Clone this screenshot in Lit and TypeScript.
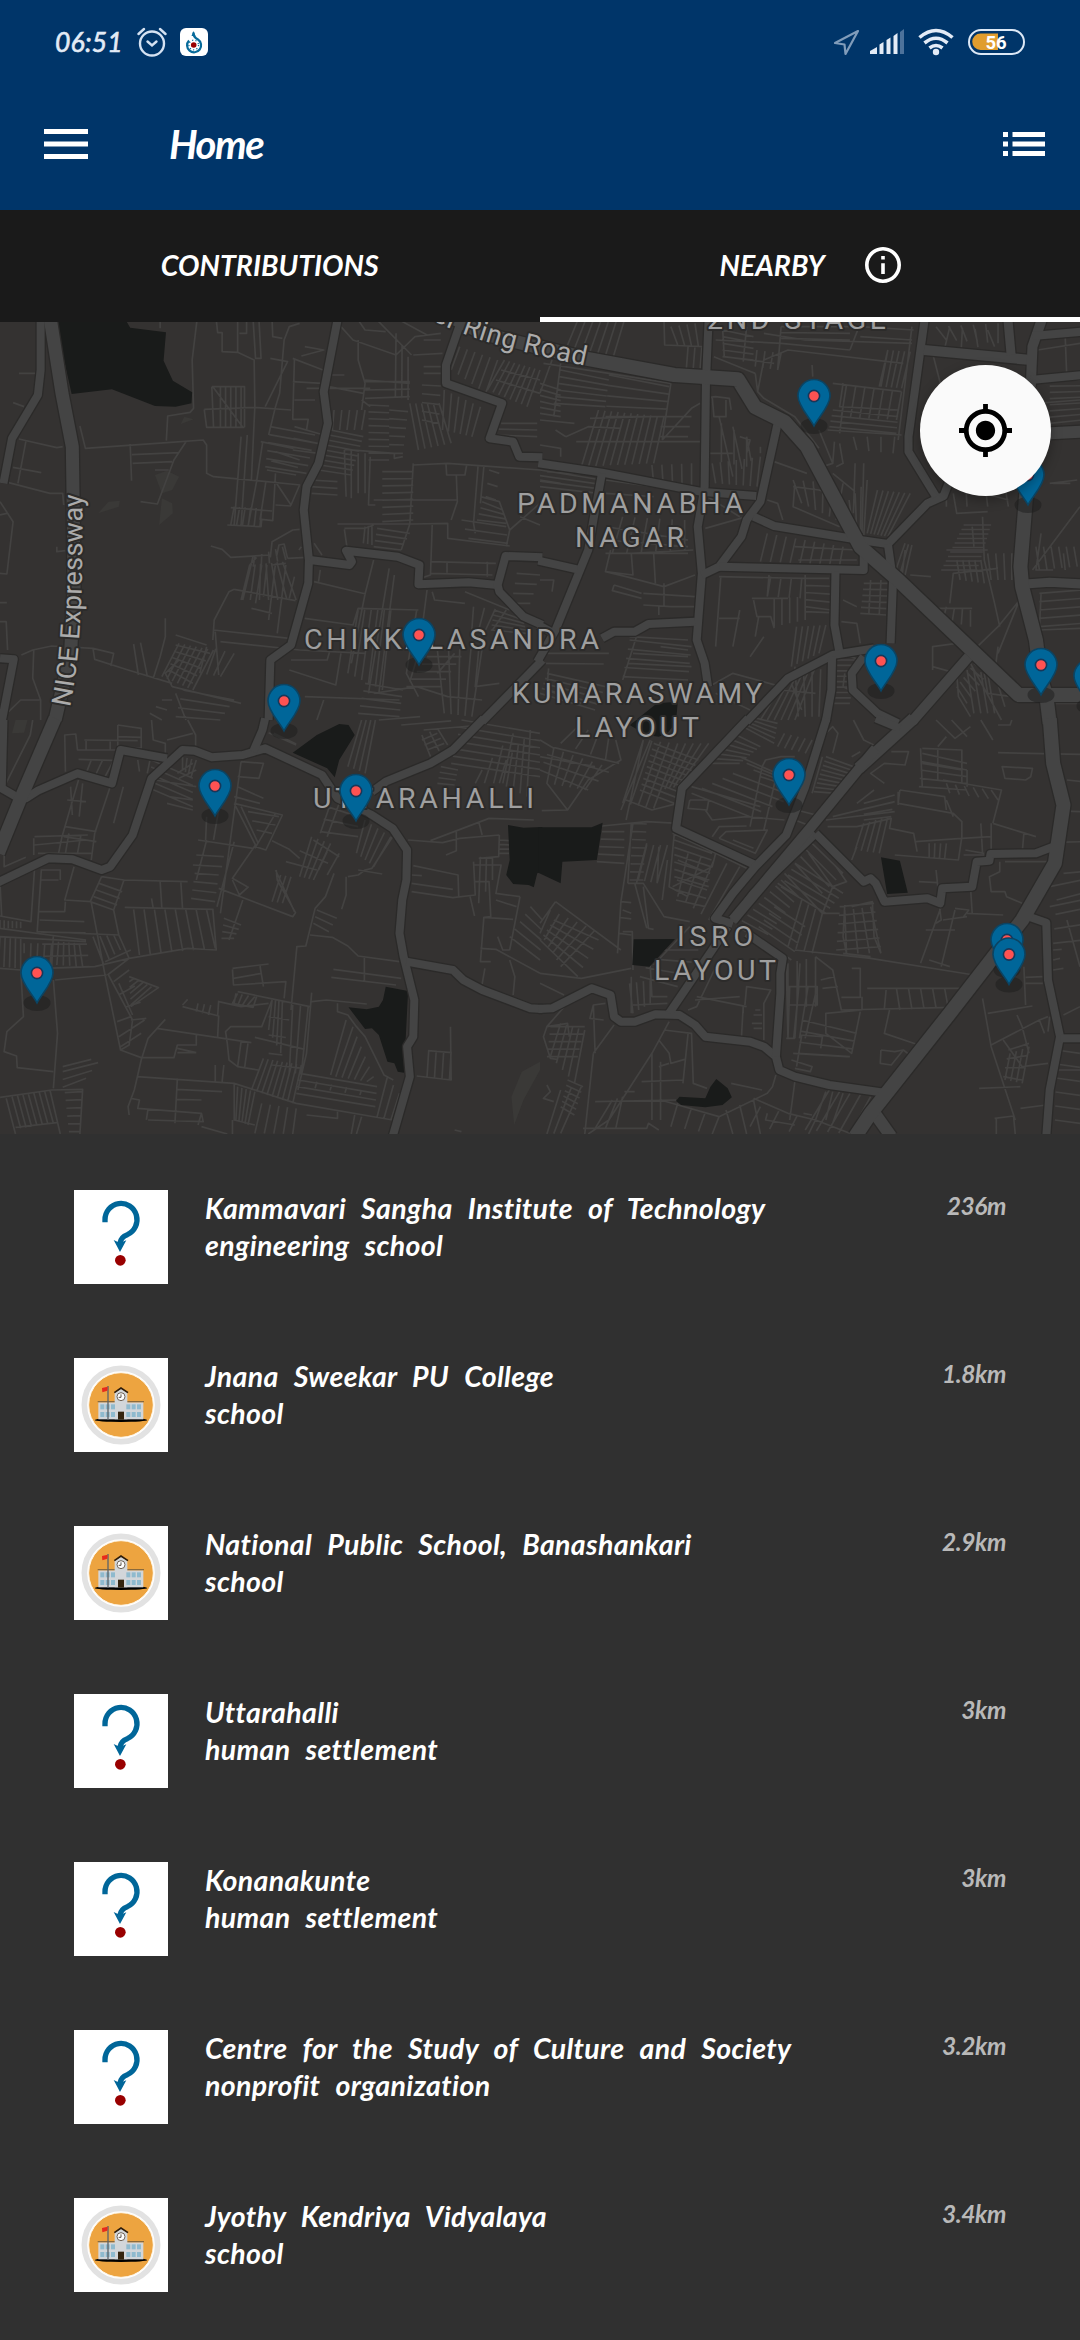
import { LitElement, html, svg, css } from "lit";
import { customElement, property } from "lit/decorators.js";

type Road = [number, string];
interface Tile {
  x: number;
  y: number;
  roads: Road[];
  water: string;
  parks: string;
  streets: string;
  // each entry: two guide segments (a-b, c-d) and the number of lines strung between them
  hatches: number[][];
}

const TILE_SCALE = "scale(0.34439 0.33333)";

const TILES: Tile[] = [
  {
    x: 0, y: 320,
    roads: [
      [8, "M118,0 118,150 110,225 35,355 10,490"],
      [13, "M145,-10 180,220 210,380 212,520 215,800 205,1000 160,1200"],
      [8, "M980,0 940,215 952,310 925,430 890,500 882,570 897,720 895,790 845,975 785,1020 780,1200"],
      [8, "M900,720 1015,735 1022,725 1005,692 1155,710 1218,735 1215,793 1360,787 1445,795"],
      [8, "M1575,712 1468,708 1445,795 1450,815 1520,890 1575,915"],
      [8, "M1340,0 1295,135 1295,190 1458,250 1422,355 1490,365 1508,410 1575,412"],
      [8, "M1575,1020 1400,1205"],
      [8, "M0,1015 40,1018 5,1205"],
      [13, "M1290,-20 1400,40 1575,85"],
    ],
    water: "M160,0 365,0 378,23 482,37 475,122 502,182 558,217 556,250 510,260 450,258 325,208 208,222Z",
    parks: "M450,465 485,452 520,470 500,510 470,520Z M285,580 315,545 348,542 345,560Z M470,535 500,550 502,580 462,615Z M535,290 562,298 525,312Z",
    streets: "M572,0 558,120 562,265 552,277 487,288 483,362 M232,318 248,385 485,368 590,360 600,375 600,460 620,470 745,482 872,495 M378,372 382,482 M383,404 520,398 M385,430 500,425 M540,365 505,420 457,552 408,545 M450,450 490,450 M55,357 165,383 182,380 M75,365 52,490 M38,442 120,458 M25,488 145,520 182,520 185,555 M0,545 38,605 20,762 0,760 M0,585 20,580 M165,680 165,695 190,692 M55,160 105,160 M38,248 70,260 M0,848 20,848 M0,905 18,905 22,990 M62,1005 95,990 150,978 270,985 330,1000 322,1038 M270,985 275,1018 372,1050 500,1090 M98,990 95,1075 118,1140 118,1200 M25,1175 60,1140 115,1140 M480,895 480,950 465,1010 445,1075 M388,972 402,1065 M408,968 428,1070 M510,945 600,975 M628,0 632,38 645,38 645,95 690,97 738,120 740,260 730,480 M690,0 690,97 M735,0 742,115 758,115 752,0 M716,0 716,40 695,40 M465,0 465,25 M593,268 738,262 845,270 M593,268 600,322 710,322 M615,200 710,200 710,322 M615,200 620,320 M618,200 705,322 M870,10 840,20 825,60 812,220 800,260 780,345 M790,0 792,50 820,55 M785,115 835,125 770,260 M812,50 M855,115 850,298 895,298 890,330 M850,115 938,150 M885,80 940,90 875,108 M850,185 935,190 M855,240 915,240 M700,350 680,615 M718,345 700,615 M763,365 745,485 720,620 M757,365 852,385 M670,563 790,573 M660,615 758,620 760,598 792,602 800,460 M772,485 755,600 M800,485 845,555 870,495 M800,555 845,558 M612,678 645,688 670,712 785,705 M870,628 850,630 790,665 785,712 M803,710 810,675 825,672 835,715 M835,715 890,712 M735,708 705,840 M760,735 742,850 M725,735 745,712 M680,808 858,842 M680,808 665,815 622,900 618,960 M620,930 840,955 M640,965 870,990 M790,735 830,730 M912,670 935,705 M868,690 875,680 M730,865 790,880 M775,735 765,830 M800,730 780,900 M830,735 805,940 M855,770 840,835 M625,935 635,1065 M912,785 1062,822 M930,750 925,785 M885,895 1025,915 1040,865 1215,870 M1085,720 1060,822 1020,1030 M1130,745 1070,1120 M1145,765 1100,1120 M1210,870 1180,1060 1215,1130 M1240,810 1225,930 M1255,615 1250,765 1220,775 M980,612 1200,612 1300,610 1300,655 1480,678 M1000,625 1060,625 1085,615 M1000,628 1008,685 M1200,430 1190,612 1165,690 M1200,435 1300,430 1568,450 M1295,432 1297,465 1350,465 1355,435 M1325,465 1328,545 1310,600 M1085,540 1330,540 M1388,440 1375,610 1380,640 M1405,440 1395,550 M1395,530 1450,545 1480,630 1568,550 M1480,630 1470,680 M1510,590 1568,615 M1250,725 1440,730 M1298,725 1298,758 M1415,725 1415,770 M1250,760 1430,765 M1255,815 1262,840 1350,850 M1350,815 1480,870 M1075,410 1070,555 1090,555 M1000,390 1005,530 M1020,390 1020,535 M1000,388 1145,400 1145,415 1170,410 M990,20 1025,60 1150,105 1205,50 1280,40 M1040,0 1060,30 1120,35 M1095,0 1195,105 M1160,0 1240,45 M1040,60 1040,120 1060,190 1050,270 M1060,180 1190,190 M1230,60 1280,60 M1200,105 1285,100 M1230,140 1290,140 M1230,160 1285,160 M955,200 1055,220 M960,165 1000,165 M500,1100 480,1060 520,1020 M500,1100 700,1150 M510,1120 540,1200 M845,1020 950,1020 960,985 M840,1050 975,1095 990,1000 M870,990 1060,1000 M885,1130 1160,1140 M940,1140 920,1200 M1085,1120 1210,1100 1300,1130 1400,1140 M1215,1000 1190,1085 M1320,1000 1270,1060 M1390,990 1380,1100 1450,1090",
    hatches: [
      [640, 200, 700, 200, 640, 320, 700, 320, 5],
      [890, 205, 1050, 240, 1075, 205, 1075, 260, 2],
      [785, 320, 770, 440, 915, 345, 890, 460, 6],
      [855, 320, 850, 390, 940, 345, 925, 400, 3],
      [775, 450, 800, 395, 860, 465, 870, 420, 3],
      [680, 560, 760, 565, 670, 615, 755, 618, 6],
      [1060, 185, 1060, 235, 1190, 185, 1190, 230, 3],
      [1070, 255, 1070, 420, 1130, 258, 1130, 420, 9],
      [1130, 270, 1130, 400, 1185, 275, 1170, 400, 6],
      [1150, 40, 1185, 110, 1148, 230, 1185, 240, 3],
      [1190, 250, 1275, 250, 1215, 390, 1310, 370, 6],
      [1225, 195, 1225, 300, 1280, 198, 1275, 310, 5],
      [1290, 210, 1395, 260, 1285, 330, 1370, 350, 6],
      [1335, 80, 1445, 120, 1310, 150, 1410, 220, 6],
      [1465, 120, 1568, 150, 1415, 210, 1530, 260, 8],
      [1455, 150, 1440, 180, 1568, 180, 1568, 220, 2],
      [1455, 310, 1440, 345, 1560, 310, 1560, 350, 3],
      [970, 270, 1060, 270, 965, 330, 1050, 330, 5],
      [960, 330, 925, 450, 1055, 350, 1020, 465, 9],
      [1020, 400, 1060, 400, 1020, 520, 1060, 520, 3],
      [1110, 455, 1110, 605, 1200, 455, 1200, 600, 8],
      [1095, 625, 1085, 680, 1190, 640, 1165, 690, 4],
      [1060, 620, 1080, 615, 1055, 670, 1080, 675, 3],
      [1340, 600, 1360, 655, 1470, 620, 1475, 670, 3],
      [1400, 545, 1385, 600, 1460, 570, 1470, 610, 4],
      [1420, 450, 1410, 530, 1450, 460, 1440, 540, 3],
      [740, 710, 820, 680, 735, 740, 830, 720, 5],
      [725, 735, 820, 725, 700, 840, 860, 840, 7],
      [1040, 870, 1135, 870, 1010, 1060, 1110, 1110, 6],
      [520, 970, 620, 990, 470, 1070, 560, 1110, 7],
      [510, 975, 490, 1050, 610, 1000, 560, 1090, 5],
      [600, 980, 680, 1000, 580, 1060, 640, 1070, 4],
      [1375, 860, 1470, 870, 1370, 930, 1430, 930, 4],
      [1435, 870, 1425, 930, 1520, 900, 1530, 940, 5],
      [1500, 760, 1485, 850, 1568, 765, 1540, 850, 4],
      [1240, 1010, 1180, 1100, 1340, 1010, 1280, 1100, 5],
      [1060, 1090, 1040, 1180, 1170, 1110, 1160, 1190, 5],
      [1270, 990, 1400, 985, 1290, 1180, 1370, 1190, 5],
      [530, 1110, 510, 1190, 680, 1140, 640, 1200, 4],
      [900, 480, 905, 520, 980, 485, 980, 525, 3],
      [470, 1140, 435, 1180, 500, 1140, 470, 1200, 3],
    ],
  },
  {
    x: 540, y: 320,
    roads: [
      [8, "M490,-10 482,180 478,500 458,620 470,760 455,960 478,1030 488,1100"],
      [8, "M-5,430 180,458 465,515 628,528"],
      [8, "M690,310 640,545 600,600 585,650 520,740 470,765"],
      [8, "M180,460 155,600 140,690 45,930 -8,1025"],
      [8, "M-5,722 108,748"],
      [8, "M-5,915 40,940"],
      [8, "M620,590 680,618 930,660 1010,672 1125,550 1172,528 1190,480"],
      [8, "M1150,530 1070,395 1070,350 1118,-10"],
      [8, "M520,740 940,750 940,700"],
      [8, "M1010,672 1025,780 1018,970"],
      [8, "M858,755 855,915 870,1000"],
      [8, "M180,955 215,935 275,935 315,912 450,905"],
      [8, "M600,1205 720,1075 850,1005 970,985"],
      [8, "M940,1010 905,1060 908,1110 980,1180 1040,1210"],
      [8, "M848,1010 846,1110 830,1205"],
      [10, "M1080,1205 1245,1010"],
      [10, "M1115,90 1425,120"],
      [9, "M1358,-10 1368,105"],
      [10, "M1460,-10 1430,80 1425,200"],
      [8, "M1430,48 1575,35"],
      [8, "M1425,180 1575,165"],
      [12, "M1440,342 1575,335"],
      [9, "M1410,792 1480,787 1575,792"],
      [14, "M1412,520 1395,740 1400,800 1440,960 1455,1080 1470,1125 1480,1210"],
      [14, "M-10,80 130,115 390,165 575,178 625,262 710,305 775,380 930,680 1040,780 1390,1125 1575,1125"],
    ],
    water: "M285,1195 340,1150 400,1145 395,1205 280,1205Z",
    parks: "",
    streets: "M360,0 362,75 480,80 M530,20 535,110 680,130 M505,110 600,150 625,160 M600,20 590,125 M632,215 650,120 720,90 1055,130 M510,60 700,70 900,90 M700,20 690,150 M650,40 770,60 1080,70 M930,10 900,90 M1010,90 985,200 M1080,20 1040,360 M625,160 632,215 650,235 740,290 810,385 M790,135 792,170 M850,190 1050,215 M880,190 870,260 1040,270 M835,330 1050,345 M855,365 850,430 M810,330 850,430 820,440 M870,370 880,430 860,440 M850,460 915,515 M915,430 910,580 M940,430 935,640 M880,260 870,340 M680,425 775,460 M660,540 690,550 705,600 M740,490 735,560 870,620 M735,500 810,510 870,530 M470,235 510,230 550,235 555,270 M500,230 505,290 540,290 540,240 M580,350 610,360 600,400 M490,400 560,400 M60,130 40,290 M75,350 45,330 M75,350 140,320 235,325 M145,295 315,290 M355,360 440,265 465,250 M380,190 355,360 M105,365 465,365 M0,375 60,385 60,410 M0,300 100,310 M10,130 200,160 380,190 M35,120 0,220 M0,480 60,490 M20,455 160,465 M480,625 600,590 M470,520 580,590 M190,755 250,770 360,800 450,765 M215,795 295,820 M215,795 210,812 295,835 M190,640 M205,690 190,755 270,765 265,700 445,690 M330,700 335,790 M300,820 450,830 M360,790 360,860 450,860 M300,855 380,860 M345,860 345,885 M0,780 40,780 35,815 M525,770 510,980 M520,895 580,895 M580,870 560,980 M665,765 660,830 M520,770 770,775 M770,765 770,875 840,878 M615,835 720,835 M620,840 630,890 670,890 680,925 M635,890 625,950 M650,950 610,1010 M0,1000 200,1000 M0,1030 185,1032 M10,990 30,970 M280,950 240,1080 M350,980 430,990 M270,1000 430,1010 M255,1030 440,1040 M260,950 430,960 M25,1045 20,1110 120,1150 M880,840 920,860 M875,905 920,910 930,970 M875,1000 930,1020 M1140,1050 1140,980 1210,970 M1140,1040 1210,1060 M1155,865 1255,865 M1190,850 1200,760 1330,745 M1200,520 1210,580 1300,575 M1285,590 1290,720 1320,850 1335,920 M1330,920 1440,780 M1240,1010 1330,920 M1430,750 1568,560 M1455,640 1440,750 1490,750 M1490,490 1540,490 M1500,600 M1520,700 1525,750 M1455,820 1450,930 1568,925 M1560,480 1480,490 M1140,100 1165,200 M1525,50 1530,180 M1445,90 1568,70 M1440,250 1568,240 M1290,520 1360,540 M1050,780 1060,690 M1075,765 1135,770 M1180,690 1300,690 M1255,620 1260,680 M1330,980 1320,1060 1350,1160 M1260,1000 1210,1060 1215,1130 1250,1190 M1290,1060 1300,1120 1370,1130 M1490,1150 1568,1150 M1400,820 1330,1000 M1250,1030 1340,1200 M885,1060 880,1100 900,1110 M510,1120 610,1170 M490,1100 560,1060 700,1100 M730,1090 760,1170 M700,1110 800,1120",
    hatches: [
      [110, 0, 245, 0, 70, 100, 210, 120, 7],
      [380, 20, 450, 10, 400, 75, 460, 80, 4],
      [430, 80, 470, 80, 425, 145, 465, 145, 3],
      [530, 30, 530, 110, 620, 50, 620, 120, 5],
      [630, 90, 700, 100, 625, 140, 690, 150, 4],
      [700, 20, 700, 55, 900, 20, 900, 60, 3],
      [930, 20, 930, 50, 1085, 30, 1080, 60, 2],
      [1010, 90, 1075, 95, 990, 200, 1050, 205, 5],
      [890, 195, 1050, 215, 875, 290, 1035, 300, 7],
      [850, 270, 840, 320, 1040, 290, 1035, 340, 4],
      [910, 350, 1030, 350, 920, 390, 1025, 400, 4],
      [60, 150, 40, 250, 200, 180, 190, 260, 6],
      [0, 190, 0, 280, 60, 210, 60, 290, 6],
      [200, 165, 190, 290, 375, 200, 370, 290, 5],
      [170, 270, 360, 290, 120, 440, 330, 430, 11],
      [350, 290, 350, 350, 440, 290, 430, 350, 3],
      [325, 435, 440, 430, 330, 490, 440, 500, 5],
      [0, 450, 0, 500, 180, 480, 170, 520, 4],
      [190, 480, 190, 520, 330, 500, 330, 530, 2],
      [490, 290, 600, 350, 490, 420, 600, 440, 4],
      [500, 430, 640, 410, 510, 490, 630, 500, 7],
      [520, 290, 640, 380, 560, 470, 640, 400, 4],
      [660, 640, 880, 680, 640, 725, 870, 735, 9],
      [740, 680, 750, 720, 920, 690, 920, 720, 2],
      [735, 480, 880, 490, 760, 550, 860, 600, 6],
      [880, 560, 950, 480, 900, 640, 940, 650, 5],
      [980, 510, 1075, 520, 950, 640, 1010, 650, 7],
      [770, 775, 770, 860, 840, 775, 845, 870, 5],
      [670, 770, 760, 775, 660, 830, 755, 835, 4],
      [680, 835, 770, 830, 680, 920, 770, 900, 5],
      [745, 920, 830, 915, 730, 1040, 810, 1000, 6],
      [940, 790, 930, 880, 1010, 790, 1005, 885, 6],
      [960, 780, 990, 780, 955, 880, 985, 885, 2],
      [1230, 615, 1165, 750, 1310, 615, 1270, 750, 11],
      [1180, 860, 1250, 870, 1170, 900, 1250, 920, 4],
      [1060, 670, 1080, 675, 1030, 760, 1060, 765, 3],
      [1480, 180, 1480, 310, 1575, 180, 1575, 300, 8],
      [1150, 20, 1330, 10, 1180, 60, 1330, 70, 6],
      [1190, 20, 1300, 30, 1175, 85, 1320, 80, 4],
      [1440, 680, 1550, 680, 1450, 750, 1560, 740, 6],
      [1450, 820, 1450, 920, 1575, 810, 1575, 910, 5],
      [240, 590, 420, 600, 210, 700, 420, 690, 6],
      [190, 620, 190, 700, 430, 660, 430, 700, 3],
      [260, 960, 240, 1070, 440, 980, 430, 1080, 5],
      [860, 1020, 850, 1150, 920, 1020, 900, 1150, 9],
      [700, 1100, 800, 1040, 640, 1200, 740, 1200, 6],
      [740, 1040, 840, 1050, 750, 1190, 830, 1190, 5],
      [1260, 1030, 1210, 1100, 1300, 1060, 1240, 1150, 6],
      [1240, 1050, 1300, 1060, 1260, 1180, 1320, 1180, 4],
      [1180, 560, 1360, 560, 1180, 500, 1350, 500, 4],
      [20, 1060, 0, 1120, 190, 1100, 160, 1170, 5],
      [1210, 720, 1280, 720, 1220, 780, 1290, 790, 5],
      [1300, 700, 1370, 700, 1310, 780, 1370, 780, 4],
    ],
  },
  {
    x: 0, y: 720,
    roads: [
      [8, "M10,0 5,205 55,235 75,235 110,212 225,160 325,190 350,90 485,115"],
      [8, "M-5,487 140,415 210,418 295,450 320,440 385,345 440,175 530,90 565,92 615,112 705,105 770,85 935,165 980,235 1080,285 1140,325 1182,390 1180,480 1168,540 1160,640 1172,710 1203,840 1200,950 1182,980 1190,1070 1140,1250"],
      [8, "M770,-5 762,30 735,95"],
      [8, "M1405,-5 1315,90 1250,130 1120,185 1080,215"],
      [8, "M1180,725 1315,750 1345,780 1400,810 1540,865 1575,867"],
      [13, "M160,-5 60,235 -5,400"],
    ],
    water: "M850,98 920,45 985,12 1012,15 1030,45 985,120 972,172 950,145Z M1475,315 1520,323 1575,321 1575,455 1560,460 1550,502 1535,495 1490,492 1470,465 1480,420Z M1120,800 1185,813 1173,1058 1155,1055 1145,1030 1125,1025 1100,945 1080,925 1060,927 1012,862 1065,868 1100,860 1112,840Z",
    parks: "M35,40 45,0 80,0 70,38Z M1568,1025 1515,1055 1485,1130 1493,1215 1520,1140 1568,1050Z",
    streets: "M95,0 88,45 15,195 M190,155 188,45 220,42 225,90 340,90 M245,60 400,62 M342,15 410,25 410,85 342,78 342,15 M342,50 410,52 M228,118 350,122 M440,0 445,60 480,70 480,110 M545,0 568,45 568,80 M485,60 560,40 M228,180 180,350 170,400 M240,190 230,290 M195,240 250,245 M205,200 210,285 M358,200 330,310 M320,200 275,340 265,420 M100,350 255,345 M98,355 98,405 M75,412 12,440 12,400 M100,450 90,605 0,588 M120,450 108,635 345,645 M120,480 170,480 M118,450 175,450 175,480 M215,440 188,540 265,545 M190,545 188,575 110,575 M295,470 262,545 330,570 360,480 295,470 M360,480 545,485 M465,485 470,565 M525,485 530,565 M362,562 620,568 M440,535 445,565 M330,570 345,645 375,715 M618,568 628,690 545,685 375,715 275,740 M265,548 305,765 350,990 410,1013 505,1013 515,975 570,975 570,945 M0,625 250,660 M0,650 250,665 M155,645 150,740 M130,745 275,740 M160,780 310,765 M60,745 68,890 20,935 12,995 48,1008 50,1043 155,1055 M155,780 167,940 155,1105 M0,745 60,750 M0,490 5,590 M375,715 312,765 M305,725 380,690 M315,765 385,900 375,975 350,990 M340,905 380,890 M375,770 460,803 380,860 M345,790 385,885 M530,860 635,888 632,950 M530,855 545,838 M635,845 700,860 780,850 M635,842 632,888 M455,925 730,968 M480,898 430,955 410,1020 390,1110 372,1160 375,1185 M398,1070 680,1090 860,1150 1140,1200 M515,1075 508,1210 M512,1108 645,1115 M512,1138 585,1140 M380,1135 405,1140 400,1165 585,1180 590,1205 430,1200 M430,1165 425,1200 M585,1180 575,1215 M700,125 765,130 752,175 690,170 M700,125 665,390 640,580 M690,200 765,235 M680,230 755,250 M680,250 820,285 772,390 742,380 M680,250 742,375 675,475 718,500 M700,260 750,370 M800,280 740,385 M790,362 840,388 870,415 M575,360 735,385 M640,240 620,360 M600,290 597,360 M570,405 650,410 M490,230 560,240 M485,250 560,270 M450,180 570,200 M560,435 645,440 M635,505 850,590 858,578 805,480 802,450 M705,540 665,660 M800,450 855,575 M675,480 695,525 722,500 M970,460 945,530 915,565 888,678 862,680 845,870 M900,645 965,652 1010,678 1040,708 1160,725 M968,748 1165,775 M962,772 1150,795 M1058,712 1058,785 M905,818 890,1000 865,1110 M905,845 948,840 1065,852 M980,850 980,875 1010,885 1035,920 1060,950 1115,1065 1142,1080 M1005,900 960,1065 M1040,450 1110,462 M1010,470 1040,465 1060,450 1080,445 1140,350 M1005,470 1005,525 992,568 M1185,360 1285,368 1335,355 1450,345 M1250,362 1420,295 1550,300 M1325,335 1325,392 1295,405 M1390,305 1400,345 M1200,437 1330,465 1332,530 M1195,490 1315,508 M1195,515 1315,533 1380,525 1375,425 M1195,465 1225,467 M1365,530 1378,588 M1450,345 1448,410 1390,415 M1375,435 1455,435 1440,520 1510,530 M1380,485 1420,485 1425,590 1405,592 1395,725 1425,725 M1405,592 1490,598 M1510,530 1480,690 M1440,540 1500,560 M1480,690 1460,690 1445,650 M1395,685 1440,688 1568,760 M1408,745 1400,792 M1480,720 1495,770 1490,825 M790,1035 880,1045 M660,970 655,935 670,920 760,920 790,840 M660,970 665,1020 690,1040 750,1050 M740,952 885,988 M690,815 900,860 M690,820 675,850 735,862 745,830 M675,745 780,732 M675,748 678,795 830,785 825,835 M678,775 760,760 M755,738 765,800 M1308,920 1310,1080 1210,1068 M1243,992 1312,998 M182,1040 265,1018 M0,1132 150,1110 240,1108 232,1242 M18,1135 45,1242 M145,1110 175,1242 M45,1222 165,1208 M780,38 860,75 M795,40 860,72 M1320,1230 1340,1235 M680,1090 680,1200 740,1215 M675,1200 675,1242 M980,1175 980,1195 890,1185 M1030,1185 1020,1242 M1050,1190 1035,1242 M585,1220 660,1242",
    hatches: [
      [250, 60, 320, 62, 250, 88, 320, 90, 2],
      [265, 120, 330, 122, 250, 160, 305, 170, 3],
      [100, 375, 110, 400, 250, 360, 265, 400, 2],
      [190, 320, 185, 350, 280, 335, 280, 365, 2],
      [200, 340, 235, 345, 190, 400, 225, 400, 2],
      [288, 490, 272, 530, 355, 515, 340, 555, 3],
      [388, 568, 600, 570, 405, 705, 625, 685, 8],
      [0, 600, 60, 605, 0, 625, 60, 625, 6],
      [0, 650, 60, 655, -5, 740, 60, 745, 5],
      [70, 670, 150, 670, 70, 700, 145, 740, 5],
      [170, 665, 230, 670, 165, 735, 240, 740, 5],
      [115, 600, 130, 745, 245, 605, 260, 740, 5],
      [270, 650, 330, 645, 300, 730, 350, 690, 4],
      [330, 785, 380, 900, 375, 750, 425, 895, 4],
      [375, 785, 380, 855, 390, 775, 440, 800, 5],
      [345, 950, 350, 980, 420, 900, 410, 940, 2],
      [575, 850, 612, 855, 570, 875, 605, 885, 3],
      [515, 985, 515, 998, 570, 998, 570, 998, 2],
      [515, 160, 520, 175, 560, 130, 570, 150, 2],
      [440, 120, 435, 205, 560, 175, 560, 260, 5],
      [400, 120, 470, 125, 405, 155, 450, 165, 3],
      [530, 110, 570, 120, 530, 150, 555, 170, 4],
      [565, 460, 555, 535, 635, 465, 625, 545, 4],
      [600, 360, 680, 365, 570, 480, 630, 560, 2],
      [720, 275, 745, 330, 810, 290, 790, 340, 3],
      [650, 595, 643, 655, 700, 615, 680, 655, 4],
      [815, 465, 845, 470, 790, 545, 820, 550, 3],
      [905, 350, 960, 370, 870, 470, 910, 480, 4],
      [985, 400, 950, 395, 950, 465, 925, 450, 2],
      [830, 425, 910, 360, 920, 450, 985, 410, 3],
      [950, 260, 930, 335, 1040, 290, 1040, 350, 3],
      [960, 250, 985, 250, 930, 340, 950, 350, 2],
      [1060, 300, 1135, 350, 1035, 400, 1085, 440, 5],
      [920, 570, 910, 610, 978, 595, 955, 635, 3],
      [1050, 0, 1090, 0, 1010, 140, 1060, 160, 4],
      [1100, 0, 1230, 30, 1220, -10, 1400, 15, 3],
      [1225, 45, 1270, 25, 1250, 110, 1300, 75, 3],
      [1225, 60, 1240, 90, 1270, 40, 1290, 70, 3],
      [1340, 0, 1310, 130, 1568, 40, 1568, 170, 7],
      [1280, 140, 1270, 190, 1330, 150, 1320, 195, 4],
      [1470, 120, 1540, 30, 1450, 190, 1530, 230, 5],
      [1400, 150, 1490, 40, 1380, 190, 1460, 190, 4],
      [1540, 560, 1480, 650, 1575, 600, 1568, 720, 5],
      [1450, 360, 1450, 400, 1478, 362, 1478, 400, 4],
      [1395, 410, 1430, 410, 1390, 550, 1430, 480, 3],
      [685, 820, 740, 830, 680, 850, 715, 860, 4],
      [790, 840, 820, 845, 780, 930, 815, 1000, 4],
      [780, 890, 780, 1000, 840, 900, 820, 1005, 3],
      [850, 855, 895, 860, 840, 1060, 875, 1060, 3],
      [765, 1015, 875, 1035, 730, 1110, 850, 1150, 9],
      [700, 965, 720, 970, 690, 1040, 710, 1045, 2],
      [870, 1060, 860, 1120, 1095, 1100, 1090, 1160, 4],
      [1025, 920, 1085, 1070, 975, 1070, 1065, 1085, 6],
      [1125, 1070, 1160, 1120, 1095, 1190, 1135, 1200, 3],
      [1245, 990, 1310, 995, 1240, 1070, 1305, 1080, 4],
      [182, 1055, 182, 1102, 285, 1028, 250, 1075, 3],
      [35, 1130, 130, 1115, 60, 1225, 155, 1210, 7],
      [188, 1118, 200, 1235, 240, 1115, 230, 1235, 6],
      [690, 1100, 740, 1115, 685, 1200, 720, 1215, 5],
      [760, 1150, 860, 1165, 740, 1240, 850, 1242, 5],
      [625, 1035, 650, 1035, 625, 1085, 645, 1085, 2],
      [920, 1085, 1050, 1110, 915, 1105, 1045, 1125, 4],
    ],
  },
  {
    x: 540, y: 720,
    roads: [
      [8, "M605,-5 412,205 395,325 625,435"],
      [8, "M832,-5 770,200 715,345 625,440 560,520 508,595 560,612"],
      [8, "M560,605 620,520 800,340"],
      [12, "M1085,-5 925,145"],
      [10, "M975,85 780,330 560,600"],
      [8, "M975,-5 1045,25"],
      [8, "M800,340 940,485 960,475 975,490 1000,545 1125,535 1162,550 1168,505 1255,500 1268,425 1305,422 1308,402 1440,400 1490,380"],
      [8, "M-5,867 35,865 150,805 205,825 215,890 235,905 275,905 335,883 405,885 450,915 480,950 610,965 650,980 685,1010 695,1050 740,1070 840,1095 1010,1120"],
      [8, "M375,880 500,690 545,620"],
      [8, "M600,640 705,715 698,760 698,820 685,1010"],
      [8, "M1420,590 1470,608 1475,780 1510,950 1480,1110 1470,1250"],
      [8, "M1510,955 1575,955"],
      [12, "M965,1170 1020,1250"],
      [14, "M1480,-5 1490,130 1520,255 1495,430 1400,600 1190,880 960,1180 915,1250"],
    ],
    water: "M-5,322 150,322 182,308 165,420 65,425 60,490 -5,458Z M272,658 392,657 318,740 268,735Z M990,412 1045,422 1068,518 1008,522Z M395,1143 405,1130 480,1135 495,1100 512,1077 545,1105 557,1132 530,1155 480,1162 410,1155Z M260,15 280,0 400,0 370,40 345,50 310,45Z",
    parks: "",
    streets: "M0,60 40,85 20,190 80,270 5,272 M0,110 160,140 M80,270 140,180 235,120 220,60 M250,240 325,270 400,250 M235,270 320,60 M300,60 250,300 M270,310 235,545 225,700 M180,318 310,305 400,310 M310,370 280,490 M255,490 300,490 360,590 435,605 M300,500 315,625 330,628 M275,490 310,625 M240,570 265,580 M240,635 268,635 270,750 M45,545 235,690 M45,545 0,610 M0,760 120,775 265,745 M0,790 70,825 M265,310 255,490 M345,380 340,490 M370,420 355,540 M385,340 510,400 500,440 385,500 M390,340 375,500 430,530 M510,400 600,445 M435,240 490,240 485,270 430,265 435,240 M440,200 640,260 M480,270 500,300 600,290 710,300 M500,350 520,320 600,318 M520,355 540,335 660,330 625,400 520,355 M560,360 620,385 M645,140 655,120 700,110 740,110 M645,140 610,320 M690,150 650,330 M745,270 820,290 M740,300 790,320 M820,110 790,220 M810,60 850,20 865,40 850,100 M910,0 940,60 980,80 M905,110 930,95 M1020,95 1070,95 1060,135 1000,130 960,160 1000,190 M1110,85 1225,90 1225,190 M1105,85 1110,200 M1155,85 1155,180 M1155,80 1180,50 M1110,130 1225,150 M1045,210 1040,250 1200,280 1225,305 1225,350 M1045,210 1175,230 1180,270 M1170,180 1340,210 1315,310 M1240,150 1240,200 M1150,0 1205,55 1250,20 M1195,0 1240,50 M1280,0 1315,60 M1370,0 1365,15 1330,15 M1330,98 1568,103 M1342,140 1430,145 1425,170 1410,180 1350,175Z M835,320 920,320 1020,295 1015,325 1085,340 1095,395 M830,300 1030,275 M850,290 1030,245 M920,250 970,210 M920,380 905,420 M1030,405 1215,420 1225,350 M1090,365 1225,355 1310,350 M1235,390 1290,400 M1230,405 1290,405 M1280,310 1285,400 M1310,310 1310,400 M1315,310 1440,350 M1405,340 1400,400 M1335,425 1335,455 1305,470 1310,515 1350,515 1355,530 1400,550 M1350,425 1480,425 M1150,450 1155,500 M1100,485 1155,488 M1250,500 1255,580 M1160,560 1165,600 1150,610 M1205,565 1245,570 1230,590 M1240,580 1345,585 M1165,560 1105,730 M1205,570 1165,740 M1120,630 1205,630 M780,400 850,500 820,580 870,580 M710,460 820,580 M690,490 750,530 M850,500 890,485 860,440 M740,690 960,715 1260,765 1225,800 M885,555 880,650 890,700 M905,560 965,545 970,650 990,700 M880,700 960,710 M950,805 1230,805 M1005,810 1000,865 M800,710 850,750 875,870 1195,862 M935,830 935,870 830,880 830,940 905,1000 930,875 M875,832 930,832 930,745 905,745 M815,780 855,770 M820,805 865,800 M1015,870 1000,940 1100,975 M990,990 1030,995 1055,990 1020,1035 988,1030 990,990 M1055,990 1080,1010 M1285,835 1310,980 1380,1200 M1300,880 1430,858 M1405,740 1410,855 M1310,975 1450,900 1475,890 M1385,885 1400,920 1420,1000 M1345,960 1400,1040 1475,1030 M1275,1105 1395,1100 M1325,1195 1325,1242 M1320,1195 1375,1188 1380,1242 M1395,1165 1470,1155 M1480,1050 1568,1050 M1520,885 1568,860 M1490,690 1515,688 M1490,720 1510,715 M1490,750 1520,745 M1410,772 1460,770 M1410,790 1460,790 M1530,600 1568,740 M360,930 440,940 445,1090 485,1105 M375,905 325,1000 200,1200 140,1242 M430,940 415,1090 M345,960 375,1000 380,1030 420,1018 M350,1025 350,1200 M375,1030 345,1040 M295,1085 415,1080 M325,1000 325,1200 M245,1115 275,1115 M160,1145 395,1140 M125,1225 310,1225 315,1210 345,1230 M155,1000 130,1242 M155,1000 215,915 M155,855 160,1000 M20,920 10,950 30,1015 50,1018 M75,855 20,920 80,910 85,950 M190,850 155,855 145,895 185,900 M20,1095 30,1115 10,1135 40,1145 M520,1190 660,1120 675,1100 685,1065 M555,1090 645,1110 M520,1190 350,1140 M620,1135 720,1180 800,1200 900,1240 M660,1180 655,1200 740,1215 M740,1085 725,1200 M830,1115 800,1200 M765,1180 790,1185 M850,1115 830,1200 M880,1120 850,1210 M455,830 600,860 M520,720 455,860 430,870 M590,860 585,950 M595,855 600,800 670,810 650,850 650,960 M625,870 640,870 M620,885 645,885 M615,910 645,910 M620,925 645,925 M720,955 715,730 M740,955 755,730 M715,955 740,955 M720,800 805,800 805,855 720,855 M320,735 325,830 370,830 M265,770 265,880 M435,620 330,735 M270,855 370,850 M760,945 745,1040 M755,945 820,950 815,985 M735,1000 890,1010 M730,1020 790,1040 785,1055 740,1045",
    hatches: [
      [40, 85, 180, 135, 20, 190, 130, 210, 6],
      [30, 80, 0, 150, 230, 130, 140, 210, 4],
      [110, 20, 200, 50, 60, 70, 190, 120, 4],
      [300, 60, 400, 70, 240, 250, 330, 265, 5],
      [330, 70, 290, 210, 460, 120, 390, 250, 9],
      [400, 70, 490, 70, 350, 210, 400, 200, 5],
      [560, 40, 480, 130, 640, 80, 580, 130, 7],
      [560, 160, 440, 220, 740, 230, 610, 290, 5],
      [640, 170, 580, 110, 760, 210, 730, 180, 4],
      [590, 20, 610, -10, 680, 70, 690, 10, 5],
      [710, 40, 790, 60, 690, 80, 770, 100, 5],
      [830, 110, 795, 215, 910, 140, 860, 220, 9],
      [180, 335, 165, 425, 245, 335, 245, 430, 5],
      [270, 310, 260, 480, 310, 312, 300, 480, 8],
      [310, 375, 370, 375, 285, 480, 340, 490, 4],
      [390, 360, 390, 470, 500, 400, 490, 500, 6],
      [400, 420, 395, 540, 490, 460, 480, 560, 5],
      [430, 400, 580, 440, 400, 530, 490, 600, 5],
      [30, 570, 160, 630, 0, 640, 60, 740, 6],
      [0, 660, 40, 600, 110, 770, 170, 660, 5],
      [235, 545, 230, 640, 265, 548, 265, 645, 3],
      [740, 430, 700, 500, 880, 520, 830, 580, 5],
      [790, 370, 740, 430, 880, 460, 820, 520, 4],
      [700, 480, 570, 620, 750, 530, 650, 660, 9],
      [680, 560, 620, 640, 770, 620, 730, 720, 5],
      [760, 540, 820, 580, 720, 680, 790, 700, 4],
      [870, 560, 860, 690, 970, 550, 990, 680, 6],
      [885, 570, 960, 560, 890, 700, 990, 700, 4],
      [940, 250, 940, 300, 1030, 225, 1020, 290, 4],
      [940, 310, 1010, 290, 915, 390, 985, 400, 5],
      [1040, 255, 1200, 290, 1040, 215, 1180, 240, 2],
      [1110, 100, 1100, 200, 1240, 130, 1240, 210, 5],
      [1130, 370, 1180, 370, 1130, 415, 1175, 415, 4],
      [1180, 190, 1310, 210, 1190, 220, 1330, 240, 6],
      [1170, 600, 1130, 720, 1240, 590, 1190, 740, 2],
      [1035, 805, 1175, 805, 1045, 870, 1185, 862, 5],
      [725, 800, 805, 800, 720, 955, 770, 955, 4],
      [760, 900, 750, 1000, 920, 940, 900, 1010, 4],
      [720, 730, 800, 710, 720, 860, 800, 860, 4],
      [340, 690, 290, 770, 460, 690, 400, 800, 4],
      [260, 790, 320, 780, 270, 880, 320, 850, 4],
      [60, 910, 130, 930, 30, 1010, 100, 1090, 5],
      [30, 920, 20, 1010, 130, 920, 110, 1010, 5],
      [80, 1080, 60, 1160, 125, 1100, 100, 1185, 6],
      [60, 1110, 120, 1100, 20, 1242, 60, 1240, 3],
      [1365, 1000, 1420, 980, 1350, 1080, 1400, 1090, 4],
      [1360, 990, 1345, 1070, 1420, 970, 1400, 1080, 4],
      [1450, 900, 1480, 890, 1465, 940, 1475, 935, 2],
      [1500, 990, 1495, 1200, 1568, 1000, 1568, 1210, 6],
      [1500, 540, 1490, 670, 1575, 520, 1575, 660, 4],
      [1530, 180, 1520, 460, 1575, 185, 1575, 455, 4],
      [840, 1110, 960, 1130, 770, 1230, 900, 1242, 5],
      [540, 1170, 620, 1140, 560, 1242, 640, 1242, 3],
      [400, 1150, 520, 1190, 380, 1220, 500, 1242, 4],
      [640, 1160, 800, 1200, 610, 1220, 780, 1242, 4],
      [450, 840, 590, 880, 580, 830, 590, 860, 2],
      [210, 1140, 240, 1130, 160, 1225, 220, 1225, 3],
      [1480, 500, 1480, 560, 1575, 480, 1575, 540, 2],
    ],
  },
];

const hatchPath = (h: number[]): string => {
  const [ax, ay, bx, by, cx, cy, dx, dy, n] = h;
  let d = "";
  for (let i = 0; i < n; i++) {
    const t = n > 1 ? i / (n - 1) : 0;
    d += `M${ax + (bx - ax) * t},${ay + (by - ay) * t} ${cx + (dx - cx) * t},${cy + (dy - cy) * t}`;
  }
  return d;
};

const PINS: [number, number][] = [
  [419, 635], [284, 701], [215, 786], [356, 791], [37, 973], [814, 396], [1028, 475],
  [881, 661], [1041, 665], [1090, 676], [789, 775], [1007, 940], [1009, 954.5],
];

const LABELS: [string, number, number, number][] = [
  ["2ND STAGE", 709, 884, 329],
  ["PADMANABHA", 519, 741, 512.5],
  ["NAGAR", 577, 682, 547],
  ["CHIKKALASANDRA", 306, 597, 648.5],
  ["KUMARASWAMY", 514, 760, 702.5],
  ["LAYOUT", 577, 697, 737],
  ["UTTARAHALLI", 315, 532, 808],
  ["ISRO", 679, 751, 945.5],
  ["LAYOUT", 656, 774, 980],
];

@customElement("nearby-map")
class NearbyMap extends LitElement {
  static styles = css`
    :host { display: block; position: relative; height: 812px; overflow: hidden; background: #343231; }
    .canvas { display: block; width: 1080px; height: 812px; }
    .tile path { vector-effect: non-scaling-stroke; fill: none; stroke-linejoin: round; stroke-linecap: butt; }
    .tile .street { stroke: #434241; stroke-width: 1.7; }
    .tile .casing { stroke: #2b2a29; }
    .tile .road { stroke: #444444; }
    .tile .water { fill: #191b1a; }
    .tile .park { fill: #3a3937; }
    .label { font: 400 28.5px "Roboto", sans-serif; fill: #9f9f9f; stroke: #2c2b2a; stroke-width: 4px; paint-order: stroke; stroke-linejoin: round; }
    .roadname { fill: #ababab; font-size: 27px; }
    .fab {
      position: absolute; left: 920px; top: 43px; width: 131px; height: 131px; border-radius: 50%;
      background: #fafafa; display: flex; align-items: center; justify-content: center;
      box-shadow: 0 4px 12px rgba(0, 0, 0, 0.3);
    }
  `;

  private tile(t: Tile, content: unknown) {
    return svg`<g class="tile" transform="translate(${t.x} ${t.y}) ${TILE_SCALE}">${content}</g>`;
  }

  render() {
    return html`
      <svg class="canvas" viewBox="0 322 1080 812">
        ${TILES.map((t) => this.tile(t, svg`
          <path class="park" d=${t.parks}></path>
          <path class="street" d=${t.streets + t.hatches.map(hatchPath).join("")}></path>
          <path class="water" d=${t.water}></path>`))}
        ${TILES.map((t) => this.tile(t, t.roads.map(([w, d]) => svg`<path class="casing" d=${d} stroke-width=${w + 2.6}></path>`)))}
        ${TILES.map((t) => this.tile(t, t.roads.map(([w, d]) => svg`<path class="road" d=${d} stroke-width=${w}></path>`)))}
        <path id="ring" d="M432,320 Q470,339 520,351 T620,373" fill="none"></path>
        <path id="nice" d="M70,707 Q85,640 82,480" fill="none"></path>
        <text class="label roadname"><textPath href="#ring" textLength="160">er Ring Road</textPath></text>
        <text class="label roadname"><textPath href="#nice" textLength="214">NICE Expressway</textPath></text>
        ${LABELS.map(([s, x0, x1, y]) => svg`<text class="label" x=${x0 - 2} y=${y} textLength=${x1 - x0 + 4}>${s}</text>`)}
        ${PINS.map(([x, y]) => svg`
          <g transform="translate(${x} ${y})">
            <ellipse cx="0" cy="30" rx="13.5" ry="8" fill="#1c1c1c" opacity="0.5"></ellipse>
            <path d="M0,30 C-4,22 -16,10 -16,0 A16,16.5 0 0 1 16,0 C16,10 4,22 0,30Z" fill="#006699" stroke="#0b4463" stroke-width="1.6"></path>
            <circle r="5.6" fill="#ff5252" stroke="#17375a" stroke-width="1.6"></circle>
          </g>`)}
      </svg>
      <div class="fab">
        <svg width="53" height="53" viewBox="1 1 22 22">
          <path d="M12 8c-2.21 0-4 1.79-4 4s1.79 4 4 4 4-1.79 4-4-1.79-4-4-4zm8.94 3c-.46-4.17-3.77-7.48-7.94-7.94V1h-2v2.06C6.83 3.52 3.52 6.83 3.06 11H1v2h2.06c.46 4.17 3.77 7.48 7.94 7.94V23h2v-2.06c4.17-.46 7.48-3.77 7.94-7.94H23v-2h-2.06zM12 19c-3.87 0-7-3.13-7-7s3.13-7 7-7 7 3.13 7 7-3.13 7-7 7z"></path>
        </svg>
      </div>
    `;
  }
}

const unknownIcon = svg`
  <path d="M93,97 V90 A48,49 0 1 1 160,134 Q140,141 138,160" fill="none" stroke="#006699" stroke-width="16"></path>
  <path d="M119,150 L130,155 L146,155 L157,151 L138,186Z" fill="#006699"></path>
  <circle cx="139" cy="211" r="16" fill="#990000"></circle>`;

const schoolIcon = svg`
  <circle cx="141" cy="141" r="110" fill="none" stroke="#e2e2e2" stroke-width="17"></circle>
  <circle cx="141" cy="141" r="97" fill="#eda440" stroke="#fff8ea" stroke-width="3"></circle>
  <ellipse cx="141" cy="186" rx="79" ry="6" fill="#000"></ellipse>
  <rect x="73" y="133" width="135" height="51" fill="#d2d6da"></rect>
  <path d="M71,131 H210" stroke="#8a6a3c" stroke-width="4"></path>
  <path d="M122,184 V105 L141,92 L160,105 V184Z" fill="#d2d6da"></path>
  <path d="M121,104 L141,90 L162,104" fill="none" stroke="#2c1c0c" stroke-width="5"></path>
  <circle cx="141" cy="116" r="12" fill="#fff" stroke="#6e6358" stroke-width="3"></circle>
  <path d="M141,109 V118 H134" fill="none" stroke="#3a3028" stroke-width="2.5"></path>
  ${[79, 95, 111, 157, 173, 189].map((x) => svg`
    <rect x=${x} y="139" width="12" height="15" fill="#8fbace"></rect>
    <rect x=${x} y="162" width="12" height="15" fill="#8fbace"></rect>`)}
  <rect x="132" y="161" width="18" height="24" fill="#33240f"></rect>
  <path d="M102,84 V186" stroke="#5d6468" stroke-width="4"></path>
  <path d="M84,90 L101,86 L100,98 L85,103Z" fill="#e8291c"></path>`;

@customElement("place-row")
class PlaceRow extends LitElement {
  @property() name = "";
  @property() kind = "";
  @property() distance = "";
  @property() icon = "";

  static styles = css`
    :host { display: flex; height: 94px; align-items: flex-start; color: #fff; }
    .thumb { flex: none; width: 94px; height: 94px; background: #fff; margin-right: 37px; }
    .text { flex: 1; font-size: 28.5px; line-height: 37px; white-space: nowrap; word-spacing: 8.5px; letter-spacing: 0.35px; font-variant-ligatures: none; }
    .distance { font-size: 24.5px; line-height: 32px; color: #b9b9b9; letter-spacing: -0.4px; }
  `;

  render() {
    return html`
      <svg class="thumb" viewBox="0 0 282 282">${this.icon === "school" ? schoolIcon : unknownIcon}</svg>
      <div class="text"><div>${this.name}</div><div>${this.kind}</div></div>
      <div class="distance">${this.distance}</div>
    `;
  }
}

const PLACES = [
  ["Kammavari Sangha Institute of Technology", "engineering school", "236m", "unknown"],
  ["Jnana Sweekar PU College", "school", "1.8km", "school"],
  ["National Public School, Banashankari", "school", "2.9km", "school"],
  ["Uttarahalli", "human settlement", "3km", "unknown"],
  ["Konanakunte", "human settlement", "3km", "unknown"],
  ["Centre for the Study of Culture and Society", "nonprofit organization", "3.2km", "unknown"],
  ["Jyothy Kendriya Vidyalaya", "school", "3.4km", "school"],
];

@customElement("app-root")
class AppRoot extends LitElement {
  static styles = css`
    :host {
      display: flex; flex-direction: column; width: 1080px; height: 2340px; overflow: hidden;
      background: #303030; color: #fff; font-family: "Lato", sans-serif; font-style: italic; font-weight: 700;
    }
    svg { display: block; flex: none; }
    .status { height: 84px; background: #003569; display: flex; align-items: center; padding: 0 55px; color: #e3ebf6; }
    .time { font-size: 26.5px; letter-spacing: 0.2px; font-weight: 400; width: 82px; -webkit-text-stroke: 0.6px currentColor; }
    .badge { margin-left: 13px; }
    .spacer { flex: 1; }
    .icons { display: flex; align-items: center; gap: 14px; }
    .signal { margin-left: -4px; }
    .appbar { height: 126px; box-sizing: border-box; background: #003569; display: flex; align-items: center; padding: 0 35px 6px 44px; }
    .title { font-size: 40px; letter-spacing: -1.5px; margin-left: 81px; line-height: 50px; }
    .tabs { height: 112px; display: flex; background: #1a1a1a; font-size: 28.5px; }
    .tab { flex: 1; box-sizing: border-box; display: flex; align-items: center; justify-content: center; padding-bottom: 2px; border-bottom: 5px solid transparent; padding-top: 5px; }
    .tab.active { border-bottom-color: #fff; gap: 40px; padding-left: 1px; }
    .list { display: flex; flex-direction: column; gap: 74px; padding: 56px 74px 0; }
    .level { font: 700 18.5px "Roboto", sans-serif; }
  `;

  render() {
    return html`
      <div class="status">
        <div class="time">06:51</div>
        <svg width="30" height="30" viewBox="0 0 30 30" fill="none" stroke="#d5e2f2" stroke-width="2.4" stroke-linecap="round">
          <circle cx="15" cy="16.5" r="12"></circle><path d="M10.5,14.5 L15,18.5 L19.5,14.5"></path>
          <path d="M1.5,7 L7,2 M28.5,7 L23,2"></path>
        </svg>
        <svg class="badge" width="28" height="28" viewBox="0 0 28 28">
          <rect width="28" height="28" rx="6" fill="#fff"></rect>
          <path d="M9,12.5 A7,7 0 1 0 18,11.5 Q13,9 13.5,4.5" fill="none" stroke="#066a9a" stroke-width="2.2"></path>
          <circle cx="13.7" cy="17" r="4.8" fill="none" stroke="#066a9a" stroke-width="1.2" stroke-dasharray="1.2 2.2"></circle>
          <path d="M11.5,8 L13.5,3 L15.5,8Z" fill="#066a9a"></path>
          <circle cx="13.7" cy="17" r="2.8" fill="#990000"></circle>
        </svg>
        <div class="spacer"></div>
        <div class="icons">
          <svg width="27" height="28" viewBox="0 0 27 28"><path d="M25,3 L2,15 L11.5,16.5 L12.5,26Z" fill="none" stroke="#809cba" stroke-width="2.2" stroke-linejoin="round"></path></svg>
          <svg class="signal" width="34" height="26" viewBox="0 0 34 26" fill="#e3ebf6">
            <path d="M0,25 V22 L7,18 V25Z M9.5,25 V15.5 L13.5,13 V25Z M16.5,25 V11 L20.5,8.5 V25Z M23.5,25 V7 L27.5,4 V25Z"></path>
            <path d="M30,25 V3 L34,0 V25Z" fill="#4d729b"></path>
          </svg>
          <svg width="36" height="28" viewBox="0 0 36 28" fill="none" stroke="#e3ebf6" stroke-width="3.6">
            <path d="M1.5,9.5 Q18,-4.5 34.5,9.5 M6.5,15 Q18,5.5 29.5,15 M11.5,20 Q18,15 24.5,20"></path>
            <circle cx="18" cy="24" r="3.2" fill="#e3ebf6" stroke="none"></circle>
          </svg>
          <svg width="57" height="26" viewBox="0 0 57 26">
            <path d="M12.5,4.5 H30 V21 H12.5 A8.2,8.2 0 0 1 12.5,4.5Z" fill="#e09d2e"></path>
            <rect x="1" y="1" width="55" height="24" rx="12" fill="none" stroke="#dce8f6" stroke-width="2"></rect>
            <text class="level" x="28" y="19.5" text-anchor="middle" fill="#fff">56</text>
          </svg>
        </div>
      </div>
      <div class="appbar">
        <svg width="44" height="30" viewBox="0 0 44 30" fill="#fff"><path d="M0,0H44V5H0Z M0,12.5H44V17.5H0Z M0,25H44V30H0Z"></path></svg>
        <div class="title">Home</div>
        <div class="spacer"></div>
        <svg width="42" height="24" viewBox="0 0 42 24" fill="#fff"><path d="M0,0H5V5H0Z M9.5,0H42V5H9.5Z M0,9.5H5V14.5H0Z M9.5,9.5H42V14.5H9.5Z M0,19H5V24H0Z M9.5,19H42V24H9.5Z"></path></svg>
      </div>
      <div class="tabs">
        <div class="tab">CONTRIBUTIONS</div>
        <div class="tab active">NEARBY
          <svg width="36" height="36" viewBox="2 2 20 20" fill="#fff"><path d="M11 7h2v2h-2zm0 4h2v6h-2zm1-9C6.48 2 2 6.48 2 12s4.480 10 10 10 10-4.480 10-10S17.520 2 12 2zm0 18c-4.410 0-8-3.590-8-8s3.590-8 8-8 8 3.590 8 8-3.590 8-8 8z"></path></svg>
        </div>
      </div>
      <nearby-map></nearby-map>
      <div class="list">
        ${PLACES.map(([name, kind, distance, icon]) => html`<place-row .name=${name} .kind=${kind} .distance=${distance} .icon=${icon}></place-row>`)}
      </div>
    `;
  }
}
